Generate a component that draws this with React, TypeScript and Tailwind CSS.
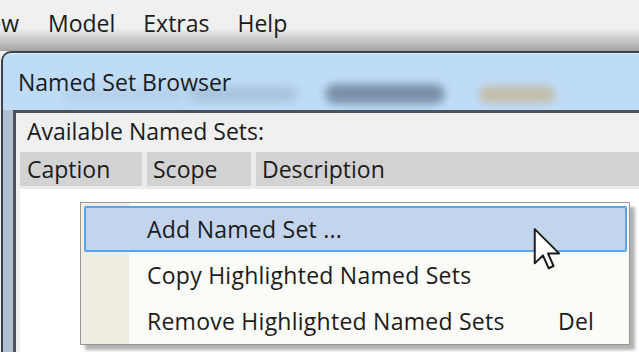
import React from "react";

const font = { fontFamily: '"Open Sans", "Noto Sans", Arial, sans-serif' };

function Cursor() {
  return (
    <svg
      className="absolute left-[533px] top-[228px]"
      width="30"
      height="42"
      viewBox="0 0 13 19"
    >
      <path
        d="M0.5 0.5 L0.5 16 L4.2 12.4 L6.8 18.2 L9 17.2 L6.5 11.5 L11.5 11.5 Z"
        fill="#ffffff"
        stroke="#1c1c1c"
        strokeWidth="0.9"
        strokeLinejoin="round"
      />
    </svg>
  );
}

function ContextMenu() {
  const items = [
    { label: "Add Named Set ...", active: true },
    { label: "Copy Highlighted Named Sets" },
    { label: "Remove Highlighted Named Sets", shortcut: "Del" },
  ];

  return (
    <div className="absolute left-[80px] top-[202px] w-[550px] h-[143px] border border-[#979797] bg-[linear-gradient(to_right,#f0ede2_48px,#fbfbf8_48px)] pl-[3px] pr-[2px] pt-[3px] tracking-[0.25px] shadow-[5px_5px_3px_rgba(0,0,0,0.3)]">
      {items.map((item) => (
        <div
          key={item.label}
          className={
            item.active
              ? "flex h-[46px] items-center rounded-[2px] border-2 border-[#5aa2f2] bg-[#c3d5ed] pl-[61px]"
              : "flex h-[46px] items-center border-2 border-transparent pl-[61px]"
          }
        >
          <span className="w-[411px] shrink-0 whitespace-nowrap">{item.label}</span>
          {item.shortcut && <span>{item.shortcut}</span>}
        </div>
      ))}
    </div>
  );
}

export default function App() {
  return (
    <div
      className="relative flex h-[352px] w-[639px] flex-col overflow-hidden bg-[#f0f0f0] text-[23px] text-[#1b1b1b]"
      style={font}
    >
      {/* app menu bar, partly covered by the window shadow */}
      <div className="flex h-[51px] shrink-0 items-start bg-linear-to-b from-[#f0f0f0] from-55% to-[#a4a4a4] pt-[6px]">
        <div className="flex w-[19px] justify-end overflow-hidden whitespace-nowrap">View</div>
        <div className="ml-[29px] flex gap-[28px]">
          <span>Model</span>
          <span>Extras</span>
          <span>Help</span>
        </div>
      </div>

      {/* dialog window */}
      <div className="ml-[1px] flex flex-1 flex-col rounded-tl-[10px] border-t-2 border-l-2 border-[#3a4250] bg-[#bfdcf7] shadow-[inset_0_1px_0_#dff0fd]">
        <div className="relative h-[57px] shrink-0 pl-[15px] pt-[12px]">
          <span className="relative z-10">Named Set Browser</span>
          <div className="absolute left-[60px] top-[36px] h-[14px] w-[120px] rounded-full bg-[#a9c3dc] opacity-50 blur-[5px]" />
          <div className="absolute left-[185px] top-[33px] h-[16px] w-[110px] rounded-full bg-[#98b2cc] opacity-60 blur-[5px]" />
          <div className="absolute left-[322px] top-[31px] h-[20px] w-[120px] rounded-full bg-[#6d839b] opacity-85 blur-[4px]" />
          <div className="absolute left-[476px] top-[33px] h-[17px] w-[76px] rounded-full bg-[#c4b596] opacity-80 blur-[4px]" />
        </div>

        <div className="flex flex-1 bg-[linear-gradient(to_right,#b0bfce,#e0e9f2_45%,#9fb0c2)] pl-[10px]">
          <div className="flex flex-1 flex-col border-t-[3px] border-l-[3px] border-[#4a525c] bg-[#f0f0f0] pl-[4px]">
            <div className="flex h-[37px] shrink-0 items-center pl-[7px]">Available Named Sets:</div>
            <div className="mt-[2px] flex h-[34px] shrink-0 gap-[5px] bg-[#ebebeb]">
              <div className="flex w-[122px] items-center bg-[#d3d3d3] pl-[7px]">Caption</div>
              <div className="flex w-[104px] items-center bg-[#d3d3d3] pl-[6px]">Scope</div>
              <div className="flex flex-1 items-center bg-[#d3d3d3] pl-[6px]">Description</div>
            </div>
            <div className="h-[3px] shrink-0 bg-[#ececec]" />
            <div className="flex-1 bg-white" />
          </div>
        </div>
      </div>

      <ContextMenu />
      <Cursor />
    </div>
  );
}
